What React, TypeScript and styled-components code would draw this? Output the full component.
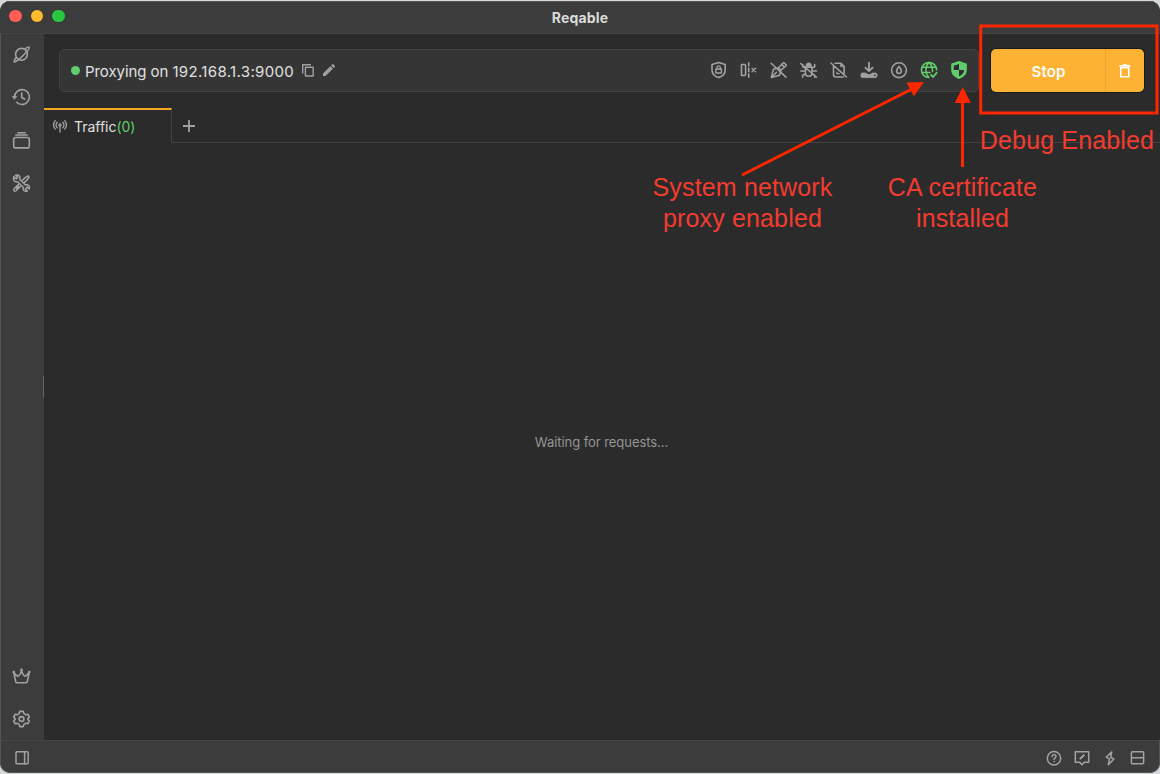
import React from "react";
import styled, { createGlobalStyle } from "styled-components";
import { MdEdit } from "react-icons/md";

const GlobalStyle = createGlobalStyle`
  body { margin: 0; background: #d5d8d8; overflow: hidden; }
  * { box-sizing: border-box; }
`;

const Window = styled.div`
  position: relative;
  width: 1160px;
  height: 774px;
  padding-top: 1px;
  font-family: Inter, "Liberation Sans", sans-serif;
  color: #e0e0e0;
`;
const Frame = styled.div`
  display: flex;
  flex-direction: column;
  height: 772px;
  border-radius: 10px;
  overflow: hidden;
  background: #2b2b2b;
`;
const TitleBar = styled.header`
  display: flex;
  align-items: center;
  height: 33px;
  padding: 0 9px 3px;
  background: #3c3c3c;
  border-top: 1px solid #555;
  border-bottom: 1px solid #444;
`;
const Lights = styled.div`
  display: flex;
  gap: 9px;
  width: 120px;
`;
const Light = styled.span<{ $color: string }>`
  width: 12.5px;
  height: 12.5px;
  border-radius: 50%;
  background: ${(p) => p.$color};
`;
const Title = styled.h1`
  flex: 1;
  margin: 0 120px 0 0;
  padding-top: 3px;
  text-align: center;
  font-size: 14px;
  font-weight: 650;
  letter-spacing: 0.15px;
  color: #dadada;
`;
const Body = styled.div`
  display: flex;
  flex: 1;
  min-height: 0;
`;
const Sidebar = styled.nav`
  display: flex;
  flex-direction: column;
  justify-content: space-between;
  width: 44px;
  padding: 10px 0 11px 10px;
  background: #3c3c3c;
  border-left: 1px solid #555;
`;
const IconColumn = styled.div`
  display: flex;
  flex-direction: column;
  gap: 23px;
`;
const Splitter = styled.span`
  position: absolute;
  left: 43px;
  top: 376px;
  width: 1px;
  height: 22px;
  background: #666;
`;
const Main = styled.main`
  display: flex;
  flex: 1;
  flex-direction: column;
`;
const Toolbar = styled.div`
  display: flex;
  gap: 12px;
  padding: 15px 16px 16px 15px;
`;
const ProxyBar = styled.div`
  display: flex;
  align-items: center;
  width: 920px;
  height: 43px;
  padding: 0 9.5px 1px 11px;
  background: #353535;
  border: 1px solid #424242;
  border-radius: 5px;
`;
const StatusDot = styled.span`
  width: 9px;
  height: 9px;
  margin-right: 5px;
  border-radius: 50%;
  background: #5fce6b;
`;
const Address = styled.span`
  width: 213px;
  padding-top: 3px;
  font-size: 15px;
  font-weight: 430;
  letter-spacing: -0.07px;
  white-space: nowrap;
`;
const Host = styled.span`
  letter-spacing: 0.34px;
`;
const InlineIcons = styled.div`
  display: flex;
  align-items: center;
  gap: 3px;
  color: #a0a0a0;
`;
const ToolIcons = styled.div`
  display: flex;
  gap: 10px;
  margin-left: auto;
`;
const StopGroup = styled.div`
  display: flex;
  width: 153px;
  height: 43px;
  border-radius: 5px;
  overflow: hidden;
  background: #fdb233;
  color: #fff;
  box-shadow: 0 0 0 1px #17191f;
`;
const StopButton = styled.button`
  width: 114px;
  padding: 2px 0 0 1px;
  border: 0;
  background: none;
  color: inherit;
  font: 600 15px Inter, sans-serif;
  letter-spacing: 0.1px;
`;
const ClearButton = styled.button`
  display: flex;
  align-items: center;
  justify-content: center;
  flex: 1;
  padding: 0;
  border: 0;
  border-left: 1px solid #eda52e;
  background: none;
  color: inherit;
`;
const Tabs = styled.div`
  display: flex;
  height: 35px;
`;
const Tab = styled.div`
  display: flex;
  align-items: center;
  width: 128px;
  padding: 0 0 1px 6px;
  border-top: 2px solid #f5a623;
  border-right: 1px solid #414141;
  font-size: 14px;
`;
const TabLabel = styled.span`
  margin-left: 4px;
  font-weight: 430;
  letter-spacing: -0.03px;
`;
const Count = styled.span`
  color: #5fce6b;
`;
const TabRest = styled.div`
  display: flex;
  align-items: center;
  flex: 1;
  padding: 2px 0 0 7px;
  border-bottom: 1px solid #414141;
`;
const Empty = styled.div`
  display: flex;
  flex: 1;
  align-items: center;
  justify-content: center;
  padding-right: 1px;
  font-size: 13px;
  letter-spacing: -0.06px;
  color: #959595;
`;
const StatusBar = styled.footer`
  display: flex;
  align-items: center;
  justify-content: space-between;
  height: 33px;
  padding: 2px 11.5px 0 11px;
  background: #3c3c3c;
  border: 1px solid #555;
  border-top-color: #464646;
  border-radius: 0 0 10px 10px;
`;
const StatusGroup = styled.div`
  display: flex;
  gap: 7.8px;
`;
const Glyph = styled.svg<{ $color?: string }>`
  display: block;
  flex: none;
  color: ${(p) => p.$color ?? "#a2a2a2"};
`;
const Markup = styled.svg`
  position: absolute;
  left: 0;
  top: 0;
`;
const Note = styled.div<{ $x: number; $y: number; $w: number }>`
  position: absolute;
  left: ${(p) => p.$x}px;
  top: ${(p) => p.$y}px;
  width: ${(p) => p.$w}px;
  text-align: center;
  font: 25px/31px "Liberation Sans", sans-serif;
  letter-spacing: 0.15px;
  color: #f43b30;
  white-space: nowrap;
`;

type IconProps = { children: React.ReactNode; color?: string; weight?: number; dx?: number };
const Icon = ({ children, color, weight = 1.4, dx = 0 }: IconProps) => (
  <Glyph
    $color={color}
    width="20"
    height="20"
    viewBox={`${-dx} 0 20 20`}
    fill="none"
    stroke="currentColor"
    strokeWidth={weight}
    strokeLinecap="round"
    strokeLinejoin="round"
  >
    {children}
  </Glyph>
);

const Planet = () => (
  <Icon weight={1.6} dx={0.5}>
    <circle cx="10" cy="10.3" r="5.9" />
    <path d="M13.8 4.6C16 3.2 17.2 2.7 17.5 3C18.3 3.8 15.4 7.7 11.6 11.5C7.8 15.3 3.5 18.5 2.7 17.7C2.4 17.4 2.9 16.1 4.3 14" />
  </Icon>
);
const History = () => (
  <Icon weight={1.6} dx={0.5}>
    <path d="M3 10.3A7.4 7.4 0 1 1 5.2 15.3M10.2 6V10.5L13.3 12.2" />
    <path d="M1.2 9.5H5.1L3.1 12Z" fill="currentColor" strokeWidth=".8" />
  </Icon>
);
const Stack = () => (
  <Icon weight={1.6} dx={0.5}>
    <rect x="2.2" y="7.5" width="15.6" height="10.4" rx="2" />
    <path d="M4.3 5H15.7M6.3 2.7H13.7" />
  </Icon>
);
const Tools = () => (
  <Icon weight={1.5} dx={0.5}>
    <path d="M2.2 3.5 4.7 6 6.2 4.4 3.9 2.3C7.2 1.3 9.3 3.5 8.3 6.4L14 12C17 11.1 18.7 13.3 17.8 16L15.7 14.1 13.8 16 15.9 18C12.7 18.9 10.8 17 11.7 14.3L6 8.7C3.2 9.3 1.2 7.1 2.2 3.5Z" />
    <path d="m11 7.3 2.4-2.4 3-2.1 1.2 1.2-2.1 3L13 9.4M7 11.3l-4.4 4.4c-1.4 1.5.5 3.4 2 2L9 13.3M7 13.3l-2 2" />
  </Icon>
);
const Crown = () => (
  <Icon weight={1.6} dx={0.5}>
    <path d="M2.2 6.2 4.2 15.6C4.3 16.3 4.7 16.7 5.4 16.7H14.6C15.3 16.7 15.7 16.3 15.8 15.6L17.8 6.2C16.5 8.2 15.4 9.8 13.5 10.2C11.8 9.6 10.7 7.2 10 4.4C9.3 7.2 8.2 9.6 6.5 10.2C4.6 9.8 3.5 8.2 2.2 6.2Z" />
    <g fill="currentColor" stroke="none"><circle cx="2.2" cy="6" r="1.3" /><circle cx="10" cy="3.8" r="1.3" /><circle cx="17.8" cy="6" r="1.3" /></g>
  </Icon>
);
const Gear = () => (
  <Icon weight={1.6} dx={0.5}>
    <path d="M8.3 2.4H11.7L12.4 4.6 14.3 5.7 16.3 5.2 17.8 8 16.4 9.6V10.4L17.8 12 16.3 14.8 14.3 14.3 12.4 15.4 11.7 17.6H8.3L7.6 15.4 5.7 14.3 3.7 14.8 2.2 12 3.6 10.4V9.6L2.2 8 3.7 5.2 5.7 5.7 7.6 4.6Z" />
    <circle cx="10" cy="10" r="2.4" />
  </Icon>
);
const SidePanel = () => (
  <Icon weight={1.5}>
    <rect x="4" y="3.7" width="12.2" height="12" rx="1" /><path d="M12.6 4V16" />
  </Icon>
);
const ShieldLock = () => (
  <Icon weight={1.6} dx={-0.4}>
    <path d="m10 2.4 6.6 2.1v5.4c0 3.8-2.4 6.3-6.6 7.7-4.2-1.4-6.6-3.9-6.6-7.7V4.5Z" />
    <rect x="7.2" y="9" width="5.6" height="4" rx=".3" strokeWidth="1.4" /><path d="M8.3 9V7.6a1.7 1.7 0 0 1 3.4 0V9" strokeWidth="1.3" />
  </Icon>
);
const Split = () => (
  <Icon weight={1.6} dx={-0.6}>
    <path d="M3.1 4.5H6.5L7.2 5.5V14.5L6.5 15.5H3.1ZM10.3 2.7V6M10.3 8.3V11.7M10.3 14V17.3" /><path d="m13.6 8.2 3.6 3.6m0-3.6-3.6 3.6" strokeWidth="1.3" />
  </Icon>
);
const PenOff = () => (
  <Icon weight={1.55} dx={-0.3}>
    <path d="m2.6 17.4 2.2-8.2 5-1.5 2.5 2.5-1.5 5ZM2.8 17.2l5-5M10 7.5l3.2-3.2M12.6 10 16 6.8M13 4.2l2-1.7 2.8 2.7-2 2ZM2.4 3.2l14.9 13.9" />
  </Icon>
);
const BugOff = () => (
  <Icon weight={1.55} dx={-0.3}>
    <path d="M6.7 7.1h6.6v5.4c0 5-6.6 5-6.6 0ZM6.7 8 4 6.7V4.5M6.7 11H2.2M6.8 14 4 15.2v2.1M13.3 8 16 6.7V4.5M13.3 11h4.5M13.2 14l2.8 1.2v2.1M2 3.5l15.7 13.6" />
    <path d="M7.2 5.9C7.2 1.6 12.8 1.6 12.8 5.9Z" fill="currentColor" strokeWidth=".6" />
  </Icon>
);
const ScriptOff = () => (
  <Icon weight={1.6} dx={-0.3}>
    <path d="M4.8 6.2v8.4c0 1.7.8 2.4 2.2 2.4h7.6M6.4 3.2h5.8l3.2 3.1v7.3M2.2 3l15.5 13.8" />
    <path d="M11.6 3.4v3.4h3.6Z" fill="currentColor" strokeWidth=".4" />
    <path d="M8.2 12.2v1.4h2.4" strokeWidth="1.2" />
  </Icon>
);
const Download = () => (
  <Icon weight={1.8}>
    <path d="M10 2.7v8M6.4 7.7l3.6 3.5 3.6-3.5" />
    <path d="M3.3 13.1h3.8c1.3 2 4.5 2 5.8 0h3.8c2 0 2 4.5 0 4.5H3.3c-2 0-2-4.5 0-4.5Z" fill="currentColor" strokeWidth=".8" />
    <circle cx="15.8" cy="15.3" r=".9" fill="#353535" stroke="none" />
  </Icon>
);
const Drop = () => (
  <Icon weight={1.6}>
    <circle cx="10" cy="10.2" r="7.4" /><path d="M10 6.6c1.5 1.8 2.4 3 2.4 4.4a2.4 2.4 0 0 1-4.8 0c0-1.4.9-2.6 2.4-4.4Z" strokeWidth="1.6" />
  </Icon>
);
const GlobeCheck = () => (
  <Icon color="#5fce6b" weight={1.5}>
    <path d="M17.6 10A7.6 7.6 0 1 0 10 17.6M3 7.2H17M2.8 12.6H11M10 2.4C5.8 6.5 5.8 13.5 10 17.5M10 2.4c2.6 2.5 3.7 5.3 3.5 9.2" /><path d="m12 14.9 2.1 2.1 3.5-4.2" strokeWidth="1.8" />
  </Icon>
);
const ShieldOn = () => (
  <Icon color="#5fce6b" weight={1.5}>
    <path d="m10 1.8 7.1 2.5v5.2c0 4.4-2.7 7.1-7.1 8.8-4.4-1.7-7.1-4.4-7.1-8.8V4.3Z" fill="currentColor" />
    <path d="M10 4.1v5.8H4.8V5.7ZM10 9.9h5.2c-.2 3-2.1 4.9-5.2 6.4Z" fill="#35283b" stroke="none" />
  </Icon>
);
const Copy = () => (
  <Icon weight={1.4}>
    <path d="M4.7 13.6V4.8h8.2" strokeLinecap="butt" /><rect x="7.4" y="7.2" width="7.8" height="8.8" rx=".5" />
  </Icon>
);
const Trash = () => (
  <Icon color="#fff" weight={1.6} dx={-0.5}>
    <path d="M4.8 4.9H15.8M8.3 4.1H12.3" strokeLinecap="butt" /><path d="M6.3 6.8H14.3V15.8H6.3Z" />
  </Icon>
);
const Antenna = () => (
  <Icon weight={1.3}>
    <circle cx="10" cy="9" r="1.1" /><path d="M10 10.3V16M7.2 11.8C5.7 10 5.7 7.9 7.2 6.2M12.8 6.2c1.5 1.7 1.5 3.8 0 5.6M5.2 13C3 10.3 3 7.4 5.2 4.6M14.8 4.6c2.2 2.8 2.2 5.7 0 8.4" />
  </Icon>
);
const Plus = () => (
  <Icon weight={1.8}><path d="M10 4V16M4 10H16" strokeLinecap="butt" /></Icon>
);
const Help = () => (
  <Icon weight={1.5}><circle cx="10" cy="10.3" r="6.7" /><path d="M8.1 8.5c.2-2.7 4.1-2.3 3.9 0-.1 1.4-1.9 1.5-1.9 3.1" /><circle cx="10" cy="13.8" r=".4" fill="currentColor" strokeWidth=".7" /></Icon>
);
const Feedback = () => (
  <Icon weight={1.5}><path d="M3.3 3.7h13.4v10.5h-4.4L10 16.7l-2.3-2.5H3.3Z" /><path d="m7.8 11.1 4.5-4.3" strokeWidth="2" strokeLinecap="butt" /></Icon>
);
const Bolt = () => (
  <Icon weight={1.5}><path d="M11.8 3.9 6.2 9.2l3.2 1.7-1.1 5.9 5.6-5.8-3.2-1.5Z" /></Icon>
);
const Rows = () => (
  <Icon weight={1.5} dx={-0.5}><rect x="3.9" y="3.7" width="12.2" height="12" rx="1" /><path d="M4 9.7h12" /></Icon>
);

export default function App() {
  return (
    <Window>
      <GlobalStyle />
      <Frame>
        <TitleBar>
          <Lights><Light $color="#ff5d55" /><Light $color="#febb2e" /><Light $color="#28c840" /></Lights>
          <Title>Reqable</Title>
        </TitleBar>
        <Body>
          <Sidebar>
            <IconColumn><Planet /><History /><Stack /><Tools /></IconColumn>
            <IconColumn><Crown /><Gear /></IconColumn>
          </Sidebar>
          <Main>
            <Toolbar>
              <ProxyBar>
                <StatusDot />
                <Address>Proxying on <Host>192.168.1.3:9000</Host></Address>
                <InlineIcons><Copy /><MdEdit size={16} /></InlineIcons>
                <ToolIcons>
                  <ShieldLock /><Split /><PenOff /><BugOff /><ScriptOff /><Download /><Drop /><GlobeCheck /><ShieldOn />
                </ToolIcons>
              </ProxyBar>
              <StopGroup>
                <StopButton>Stop</StopButton>
                <ClearButton aria-label="Clear"><Trash /></ClearButton>
              </StopGroup>
            </Toolbar>
            <Tabs>
              <Tab><Antenna /><TabLabel>Traffic<Count>(0)</Count></TabLabel></Tab>
              <TabRest><Plus /></TabRest>
            </Tabs>
            <Empty>Waiting for requests...</Empty>
          </Main>
        </Body>
        <StatusBar>
          <SidePanel />
          <StatusGroup><Help /><Feedback /><Bolt /><Rows /></StatusGroup>
        </StatusBar>
      </Frame>
      <Splitter />
      <Markup width="1160" height="240" viewBox="0 0 1160 240" fill="none" stroke="#ff2600" strokeWidth="3">
        <rect x="980.7" y="26" width="176.3" height="87" />
        <path d="M742 175 912 89M962.5 167V100" />
        <path d="m924 82-17.5.4 7.3 13.8ZM962.8 87l-8 16h16Z" fill="#ff2600" stroke="none" />
      </Markup>
      <Note $x={977} $y={125} $w={180}>Debug Enabled</Note>
      <Note $x={642.5} $y={172} $w={200}>System network<br />proxy enabled</Note>
      <Note $x={872.5} $y={172} $w={180}>CA certificate<br />installed</Note>
    </Window>
  );
}
